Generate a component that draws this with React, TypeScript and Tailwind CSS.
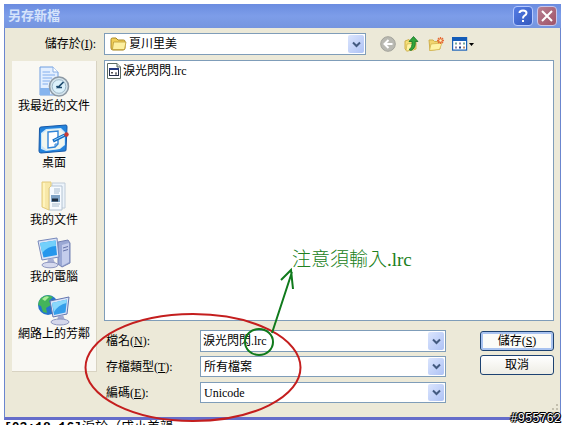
import React from 'react';

const CHEVRON = 'M1 1.5 L4.5 5 L8 1.5';

const Combo: React.FC<{ children: React.ReactNode; label: string; className?: string }> = ({ children, label, className = '' }) => (
  <div className={`flex min-w-0 flex-1 items-center border border-[#7f9db9] bg-white p-px ${className}`}>
    {children}
    <button type="button" aria-label={label} className="flex h-full w-4 shrink-0 items-center justify-center rounded-xs bg-linear-to-br from-[#dbe5fd] to-[#aec2f5]">
      <svg width="9" height="7" viewBox="0 0 9 7" fill="none" stroke="#435a80" strokeWidth="2"><path d={CHEVRON} /></svg>
    </button>
  </div>
);

const FolderIcon = () => (
  <svg width="17" height="16" viewBox="0 0 17 16" className="shrink-0">
    <path d="M1 3.5 Q1 2 2.5 2 H6 L8 4 H13.5 Q15 4 15 5.5 V12 Q15 14 13 14 H3 Q1 14 1 12 Z" fill="#f0cf58" stroke="#a98824" />
    <path d="M3.6 6 H16 L14.7 12.6 Q14.4 13.6 13.4 13.6 H2.4 Z" fill="#fdf0a0" stroke="#bd9c35" strokeWidth=".8" />
  </svg>
);

const FileIcon = () => (
  <svg width="14" height="16" viewBox="0 0 14 16" className="shrink-0">
    <path d="M.5 .5 H10 L13.5 4 V15.5 H.5 Z" fill="#fff" stroke="#5c6c64" />
    <path d="M10 .5 V4 H13.5" fill="#ddd" stroke="#5c6c64" />
    <rect x="2.5" y="5.5" width="9" height="7" fill="#fff" stroke="#25304a" />
    <path d="M2 6 H12" stroke="#263a80" strokeWidth="2" />
    <path d="M4 9.5 H6 M5 9 V11 M8 11 H10 M9 9 V11" fill="none" stroke="#555" />
  </svg>
);

const RecentIcon = () => (
  <svg width="32" height="32" viewBox="0 0 32 32">
    <path d="M2 1 H15 L20 6 V29 H2 Z" fill="#e3efff" stroke="#6f9ee0" />
    <path d="M15 1 V6 H20" fill="#fff" stroke="#8bb0e4" />
    <path d="M4.5 6 H12 M4.5 9 H17 M4.5 12 H14 M4.5 15 H12 M4.5 18 H10" stroke="#a2c4f3" strokeWidth="1.5" />
    <path d="M2 22 H12 V29 H2 Z" fill="#86b4ee" />
    <circle cx="21" cy="20.5" r="9.5" fill="#d4e4ec" stroke="#8d99a4" strokeWidth="1.6" />
    <circle cx="21" cy="20.5" r="6.8" fill="#dcf1fb" stroke="#9fb8c8" />
    <path d="M25.5 16 L20 21.5 H24 M20 21.5 L18.5 20" fill="none" stroke="#1c4a6e" strokeWidth="1.7" />
  </svg>
);

const DesktopIcon = () => (
  <svg width="32" height="32" viewBox="0 0 32 32">
    <path d="M3 4 L28 2 Q29 2 29 4 L28 27 Q28 28 27 28 L3 30 Q1 30 1 28 L1.500 6 Q1.500 4 3 4 Z" fill="#2383dc" stroke="#1458a8" />
    <path d="M3 26 V10 L8 6 L23 5 L27 9 V22 L22 26 L8 28 Z" fill="#c9e7fb" />
    <path d="M9 7 L22 6 L26 10 V22 L21 26 L9 27 L4 23 V11 Z" fill="#f0f6ee" />
    <path d="M10 9 L20 8 V21 L17 24 L10 25 Z" fill="#fff" stroke="#3185d7" strokeWidth="1.4" />
    <path d="M20 21 H17 V24" fill="none" stroke="#3185d7" />
    <path d="M15 18 L27 12" stroke="#176fc4" strokeWidth="3.4" />
    <path d="M16 17.3 L26 12.3" stroke="#8fd0fa" />
    <circle cx="28.5" cy="11.5" r="2.2" fill="#c83a32" />
  </svg>
);

const DocumentsIcon = () => (
  <svg width="32" height="32" viewBox="0 0 32 32">
    <path d="M14 3 H27 V28 H14 Z" fill="#edf4fb" stroke="#c0ccd8" />
    <path d="M11 6 H24 V30 H11 Z" fill="#f7fbff" stroke="#b4c3d2" />
    <path d="M16 9 H22 M16 11 H22 M16 13 H21 M14 24 H22 M14 26 H21" stroke="#a6bacd" />
    <rect x="13" y="15" width="9" height="7" fill="#7fa3c6" />
    <path d="M14 20 H20" stroke="#1d2d40" strokeWidth="3" />
    <path d="M4 2 H13 V6 L11 8 V30 L4 27 Z" fill="#f8e8a8" stroke="#e3cb7c" />
    <path d="M6 3 V27" stroke="#fff4bd" strokeWidth="2" />
  </svg>
);

const ComputerIcon = () => (
  <svg width="34" height="32" viewBox="0 0 34 32">
    <path d="M21 5 L31 3 L33 6 V26 L25 30 L21 27 Z" fill="#9aa8d4" stroke="#7582b4" />
    <path d="M25 8 L32 6 V25 L25 29 Z" fill="#c4cdec" />
    <path d="M26 11 L31 9.5 M26 14 L31 12.5" stroke="#6573a9" />
    <path d="M1 4 L20 1 L22 20 L5 23 Z" fill="#dce5f7" stroke="#7788bb" />
    <path d="M3 6 L18.5 3.5 L20 18 L6.500 20.5 Z" fill="#2697ec" />
    <path d="M3 6 L18.5 3.5 L19 9 Q11 9 5 16 Z" fill="#73d0fb" />
    <path d="M11 22 L16 21 L18 26 L10 27 Z" fill="#a8b0d5" />
    <ellipse cx="13" cy="28" rx="8" ry="2.8" fill="#d5d9ee" stroke="#8e97c0" />
  </svg>
);

const NetworkIcon = () => (
  <svg width="34" height="32" viewBox="0 0 34 32">
    <circle cx="11" cy="11" r="10" fill="#2474cd" />
    <path d="M4 4 Q10 -1 16 3 L12 7 L14 11 L9 14 L10 19 L6 18 L4 12 L1 11 Q1 7 4 4 Z" fill="#43b45a" />
    <path d="M5 5 Q9 1 12 3 L8 7 Z" fill="#a9eb98" />
    <path d="M13 7 L32 3 L30 20 L16 23 Z" fill="#dbe4f8" stroke="#6375ae" />
    <path d="M15 9 L30 5.5 L28.5 18.5 L17 21 Z" fill="#359eea" />
    <path d="M15 9 L30 5.5 L29.5 9 Q21 11 17 18 Z" fill="#8ad8fb" />
    <path d="M21 22 L26 21 L28 26 L20 27 Z" fill="#a2abd2" />
    <ellipse cx="23" cy="28" rx="9" ry="3" fill="#d4d7eb" stroke="#8e97c0" />
  </svg>
);

const places = [
  { name: '我最近的文件', icon: <RecentIcon /> },
  { name: '桌面', icon: <DesktopIcon /> },
  { name: '我的文件', icon: <DocumentsIcon /> },
  { name: '我的電腦', icon: <ComputerIcon /> },
  { name: '網路上的芳鄰', icon: <NetworkIcon /> },
];

const Toolbar = () => (
  <div className="flex items-center gap-2">
    <button aria-label="上一頁">
      <svg width="16" height="16" viewBox="0 0 16 16">
        <circle cx="8" cy="8" r="7.3" fill="#b9b9b2" stroke="#a3a39b" />
        <path d="M8.5 4 L4.5 8 L8.5 12 M5 8 H12.5" fill="none" stroke="#fff" strokeWidth="2" />
      </svg>
    </button>
    <button aria-label="上一層">
      <svg width="16" height="16" viewBox="0 0 16 16">
        <path d="M1 5 L5 3.5 L6.5 5 L12 4 V13 L3 15 L1 13 Z" fill="#f5df77" stroke="#d0b04c" />
        <path d="M3 8 L12 7 L10 14 L2 15 Z" fill="#fff3a5" stroke="#ceb04b" strokeWidth=".7" />
        <path d="M5 13.5 Q8.500 12 8 5.5 H5 L9.5 .5 L14 5.5 H11.2 Q12 12 7 14.5 Z" fill="#31a53b" stroke="#14732a" strokeWidth=".8" />
      </svg>
    </button>
    <button aria-label="建立新資料夾">
      <svg width="16" height="16" viewBox="0 0 16 16">
        <path d="M1 4 H5 L6.5 5.5 H12 V13 L2 14.5 Z" fill="#f2d56e" stroke="#d0b04c" />
        <path d="M3 8 L14 7 L11.5 13.5 L1.5 14.5 Z" fill="#fff3a5" stroke="#ceb04b" strokeWidth=".7" />
        <path d="M12.5 1 V8 M9 4.5 H16 M10 2 L15 7 M15 2 L10 7" stroke="#e66b36" strokeWidth="1.3" />
        <circle cx="12.5" cy="4.5" r="1.2" fill="#fff3c0" />
      </svg>
    </button>
    <button aria-label="檢視">
      <svg width="22" height="16" viewBox="0 0 22 16">
        <rect x=".6" y="1.6" width="14" height="12.5" fill="#fff" stroke="#1b62b8" strokeWidth="1.2" />
        <path d="M0 3 H15" stroke="#145cb8" strokeWidth="4" />
        <path d="M3 7.5 H5 M11 7.5 H13" stroke="#75a79a" strokeWidth="2" />
        <path d="M7 7.5 H9 M3 11.5 H5" stroke="#8b80a6" strokeWidth="2" />
        <path d="M7 11.5 H9" stroke="#173e8a" strokeWidth="2" />
        <path d="M11 11.5 H13" stroke="#b78d72" strokeWidth="2" />
        <path d="M17 7 H22 L19.5 10 Z" fill="#000" />
      </svg>
    </button>
  </div>
);

const App: React.FC = () => {
  return (
    <div className="relative overflow-hidden bg-white p-1 pb-0 font-['Liberation_Serif','Noto_Sans_CJK_TC',serif] text-xs leading-4 text-black">
      <div className="border-x border-b-3 border-x-[#6b86cf] border-b-[#656dca] bg-[#ece9d8]">
        <header className="-mx-px flex h-6 items-center gap-1 bg-linear-to-b from-[#6b8ce0] via-[#7d9de9] to-[#7595df] pr-1 pl-1">
          <h1 className="flex-1 text-[13px] font-bold text-[#d5e3fb]">另存新檔</h1>
          <button aria-label="說明" className="flex h-5 w-5 items-center justify-center rounded-sm border border-[#b6caff] bg-linear-to-br from-[#547ce5] to-[#3459bd]">
            <svg width="12" height="14" viewBox="0 0 12 14" fill="none" stroke="#fff" strokeWidth="2"><path d="M2.5 4 Q2.5 1.5 6 1.5 Q9.5 1.5 9.5 4 Q9.5 5.5 7.5 6.7 Q6 7.6 6 9.5 M6 11 V13" /></svg>
          </button>
          <button aria-label="關閉" className="flex h-5 w-5 items-center justify-center rounded-sm border border-[#c9c5e8] bg-linear-to-br from-[#b77f91] to-[#9f5268]">
            <svg width="12" height="12" viewBox="0 0 12 12" stroke="#fff" strokeWidth="2"><path d="M1 1 L11 11 M11 1 L1 11" /></svg>
          </button>
        </header>

        <div className="flex h-8 items-center pr-[86px] pl-[7px]">
          <label htmlFor="folder" className="w-[92px] shrink-0 pr-2 text-right">儲存於(<u>I</u>):</label>
          <Combo label="選擇資料夾" className="mr-[14px] h-[22px]">
            <span className="pl-1"><FolderIcon /></span>
            <input id="folder" defaultValue="夏川里美" className="min-w-0 flex-1 pl-0.5 outline-none" />
          </Combo>
          <Toolbar />
        </div>

        <div className="flex gap-[7px] pr-[6px] pl-[7px]">
          <nav className="mt-px flex h-[311px] w-[85px] shrink-0 flex-col gap-2 border-r border-b border-[#d8d3c2] bg-[#f9f8f3] pt-[5px]">
            {places.map((place) => (
              <button key={place.name} className="flex h-[49px] flex-col items-center whitespace-nowrap">
                {place.icon}
                <span>{place.name}</span>
              </button>
            ))}
          </nav>

          <main className="min-w-0 flex-1">
            <div className="h-[261px] border border-[#7f9db9] bg-white p-0.5">
              <div className="flex items-center gap-0.5">
                <FileIcon />
                <span>淚光閃閃.lrc</span>
              </div>
            </div>

            <form className="flex pt-[9px] pb-[14px]">
              <div className="flex flex-1 flex-col gap-1">
                <div className="flex h-[22px] items-center">
                  <label htmlFor="name" className="w-24 pl-0.5">檔名(<u>N</u>):</label>
                  <Combo label="檔名清單" className="h-full"><input id="name" defaultValue="淚光閃閃.lrc" className="min-w-0 flex-1 pl-px outline-none" /></Combo>
                </div>
                <div className="flex h-[21px] items-center">
                  <label htmlFor="type" className="w-24 pl-0.5">存檔類型(<u>T</u>):</label>
                  <Combo label="類型清單" className="h-full"><input id="type" defaultValue="所有檔案" className="min-w-0 flex-1 pl-0.5 outline-none" /></Combo>
                </div>
                <div className="flex h-[22px] items-center pt-px">
                  <label htmlFor="encoding" className="w-24 pl-0.5">編碼(<u>E</u>):</label>
                  <Combo label="編碼清單" className="h-full"><input id="encoding" defaultValue="Unicode" className="min-w-0 flex-1 pl-0.5 outline-none" /></Combo>
                </div>
              </div>
              <div className="ml-[34px] flex w-[74px] flex-col gap-1 pt-px">
                <button type="button" className="h-5 rounded-[3px] border border-[#1d4272] bg-[#fbfbf8] leading-4 shadow-[inset_0_0_0_2px_#a9c3f0]">儲存(<u>S</u>)</button>
                <button type="button" className="h-5 rounded-[3px] border border-[#1d4272] bg-linear-to-b from-white to-[#eeede5] leading-4">取消</button>
              </div>
            </form>
          </main>
        </div>
      </div>

      {/* top of the lyric line behind the dialog */}
      <p className="h-[5px] overflow-hidden font-['Liberation_Mono','Noto_Sans_CJK_TC',monospace] text-[13px] leading-4 whitespace-nowrap">
        <b>[03:18.16]</b>淚於（成小美韻
      </p>

      {/* resize grip */}
      <svg className="absolute top-[403px] right-1.5" width="12" height="12" viewBox="0 0 12 12" fill="#c4c0ae">
        <path d="M9 1 h2 v2 h-2z M5 5 h2 v2 h-2z M9 5 h2 v2 h-2z M1 9 h2 v2 h-2z M5 9 h2 v2 h-2z M9 9 h2 v2 h-2z" />
      </svg>

      {/* hand-drawn notes over the dialog */}
      <svg className="pointer-events-none absolute top-0 left-0" width="565" height="428" viewBox="0 0 565 428" fill="none">
        <ellipse cx="193" cy="367.5" rx="107.5" ry="53.5" stroke="#c41e1e" strokeWidth="2" />
        <ellipse cx="259" cy="342" rx="14" ry="13" stroke="#107a1c" strokeWidth="2" />
        <path d="M272 333 L292 272 M281 280 L291 270 L293 289" stroke="#107a1c" strokeWidth="2" />
      </svg>
      <p className="absolute top-[248px] left-[292px] text-[19px] leading-6 font-light text-[#208020]">注意須輸入.lrc</p>
      <p className="absolute right-1 bottom-0 font-['Liberation_Mono',monospace] text-xs leading-3 text-white [text-shadow:1px_0_#000,-1px_0_#000,0_1px_#000,0_-1px_#000,1px_1px_#000,-1px_-1px_#000]">#955762</p>
    </div>
  );
};

export default App;
